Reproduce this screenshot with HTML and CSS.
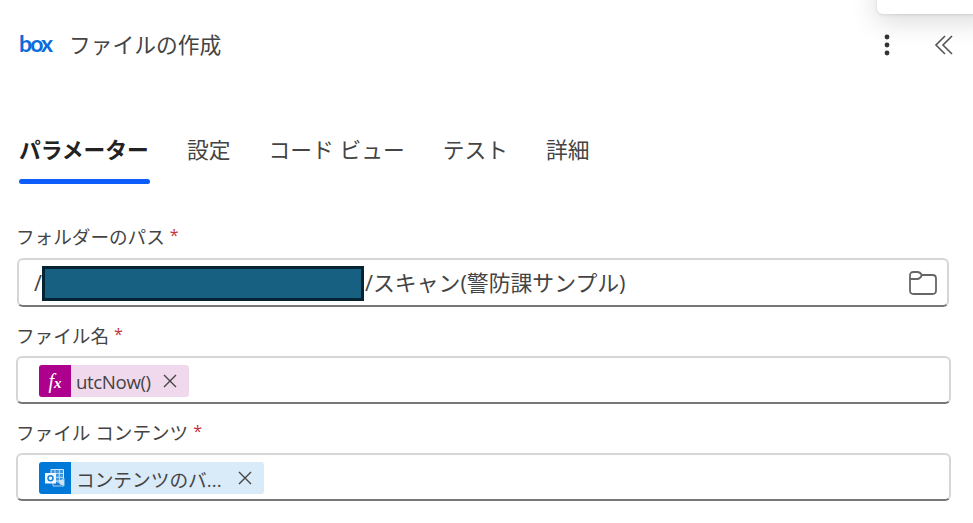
FILE: index.html
```html
<!DOCTYPE html>
<html lang="ja">
<head>
    <meta charset="UTF-8">
    <title>ファイルの作成</title>
    <link rel="stylesheet" href="styles.css">
</head>
<body>
    <div class="popup"></div>

    <div class="panel">
        <header class="header">
            <span class="logo">box</span>
            <h1>ファイルの作成</h1>
            <button class="icon-btn more-btn">
                <svg width="8" height="22" viewBox="0 0 8 22" fill="#333">
                    <circle cx="4" cy="3" r="2.4"/>
                    <circle cx="4" cy="11" r="2.4"/>
                    <circle cx="4" cy="19" r="2.4"/>
                </svg>
            </button>
            <button class="icon-btn">
                <svg width="20" height="20" viewBox="0 0 20 20" fill="none" stroke="#555" stroke-width="1.6">
                    <path d="M11 1L2 10L11 19M18 1L9 10L18 19"/>
                </svg>
            </button>
        </header>

        <nav class="tabs">
            <button class="tab active">パラメーター</button>
            <button class="tab">設定</button>
            <button class="tab">コード ビュー</button>
            <button class="tab">テスト</button>
            <button class="tab">詳細</button>
        </nav>

        <div class="form">
            <div class="field path-field">
                <label>フォルダーのパス<span class="required">*</span></label>
                <div class="input">
                    <span class="slash">/</span>
                    <span class="mask"></span>
                    <span class="path">/スキャン(警防課サンプル)</span>
                    <svg class="folder" width="30" height="26" viewBox="0 0 30 26" fill="none" stroke="#666" stroke-width="1.8">
                        <path d="M2 5.500Q2 2 5.500 2H9.500Q12 2 14 5H24.500Q28 5 28 8.500V20.500Q28 24 24.500 24H5.500Q2 24 2 20.500Z"/>
                        <path d="M2 9H9.500Q12 9 14 5"/>
                    </svg>
                </div>
            </div>

            <div class="field name-field">
                <label>ファイル名<span class="required">*</span></label>
                <div class="input">
                    <div class="token token-fx">
                        <span class="token-icon"><i>f</i><i class="sub">x</i></span>
                        <span class="token-text">utcNow()</span>
                        <svg class="close" width="14" height="14" viewBox="0 0 14 14" stroke="#444" stroke-width="1.4">
                            <path d="M1 1L13 13M13 1L1 13"/>
                        </svg>
                    </div>
                </div>
            </div>

            <div class="field content-field">
                <label>ファイル コンテンツ<span class="required">*</span></label>
                <div class="input">
                    <div class="token token-mail">
                        <span class="token-icon">
                            <svg width="20" height="20" viewBox="0 0 20 20" fill="none">
                                <path d="M6 1.500H18.500V13H6Z" fill="#3c96e0" stroke="#d5e9fa"/>
                                <path d="M10 1.500V13M14.300 1.500V13M6 5.500H18.500M6 9.300H18.500" stroke="#d5e9fa" stroke-width=".8"/>
                                <path d="M8 11L13 14.500L19 10.500V18H8Z" fill="#1979cf" stroke="#d5e9fa" stroke-width=".8"/>
                                <path d="M14 12H19V17Q16 18 14 15Z" fill="#c8e2f8"/>
                                <path d="M0 5H11V15.500H0Z" fill="#f1f7fd"/>
                                <circle cx="5.500" cy="10.200" r="2.500" stroke="#1683d8" stroke-width="1.500"/>
                            </svg>
                        </span>
                        <span class="token-text">コンテンツのバ...</span>
                        <svg class="close" width="14" height="14" viewBox="0 0 14 14" stroke="#444" stroke-width="1.4">
                            <path d="M1 1L13 13M13 1L1 13"/>
                        </svg>
                    </div>
                </div>
            </div>
        </div>
    </div>
</body>
</html>
```

FILE: styles.css
```css
* {
    box-sizing: border-box;
}

body {
    margin: 0;
    height: 523px;
    overflow: hidden;
    background-color: #fff;
    color: #444;
    font-family: "Open Sans", "Noto Sans CJK JP", sans-serif;
}

button {
    padding: 0;
    border: none;
    background: none;
    color: inherit;
    font-family: inherit;
    cursor: pointer;
}

svg {
    display: block;
    flex-shrink: 0;
}

/* 右上に重なるカード */
.popup {
    position: absolute;
    top: -20px;
    right: -20px;
    width: 116px;
    height: 34px;
    background-color: #fff;
    border-radius: 6px;
    box-shadow: 0 1px 3px rgba(0,0,0,0.1), 0 6px 28px rgba(0,0,0,0.16);
}

.header {
    display: flex;
    align-items: center;
    height: 90px;
    padding: 0 19px 0 19px;
}

.logo {
    width: 50px;
    color: #0b6bdc;
    font-family: Lato, sans-serif;
    font-size: 23px;
    font-weight: bold;
    letter-spacing: -1.9px;
    line-height: 24px;
    margin-top: -4px;
}

.header h1 {
    flex: 1;
    margin: 0;
    font-size: 21.75px;
    font-weight: normal;
    line-height: 30px;
}

.more-btn {
    margin-right: 43px;
}

.tabs {
    display: flex;
    gap: 38px;
    height: 95px;
    padding: 43px 19px 0;
}

.tab {
    height: 51px;
    padding-bottom: 17px;
    border-bottom: 5px solid transparent;
    font-size: 21.75px;
    line-height: 34px;
    white-space: nowrap;
    display: flex;
}

.tab.active {
    position: relative;
    width: 131px;
    margin-right: -1px;
    color: #222;
    font-weight: bold;
}

.tab.active::after {
    content: "";
    position: absolute;
    left: 0;
    right: 0;
    bottom: -5px;
    height: 5px;
    border-radius: 3px;
    background-color: #0c5dfb;
}

.form {
    padding: 38px 22px 0 16px;
}

.field label {
    display: block;
    height: 35px;
    font-size: 18.6px;
    line-height: 27px;
}

.required {
    margin-left: 5px;
    color: #c4313b;
    font-size: 16px;
    line-height: 1;
    vertical-align: 3px;
}

.input {
    display: flex;
    align-items: center;
    height: 48px;
    padding-left: 21px;
    border: 2px solid #d6d6d6;
    border-bottom-color: #777;
    border-radius: 6px;
}

.path-field .input {
    height: 49px;
    margin: 0 2px 0 1px;
    padding: 0 9px 0 15px;
}

.name-field {
    margin-top: 14px;
}

.content-field {
    margin-top: 14px;
}

.name-field label, .content-field label {
    line-height: 29px;
}

.slash, .path {
    font-size: 21.85px;
    line-height: 30px;
}

.slash {
    width: 8px;
}

.mask {
    width: 322px;
    height: 35px;
    margin-top: 1px;
    background-color: #176082;
    border: 3px solid #042433;
}

.path {
    flex: 1;
    margin-left: 1px;
}

.token {
    display: flex;
    align-items: center;
    height: 32px;
    margin-top: 2px;
    border-radius: 3px;
    overflow: hidden;
    font-size: 18.7px;
}

.token-fx {
    width: 150px;
    background-color: #f1d9ed;
}

.token-mail {
    width: 225px;
    background-color: #d9eaf8;
}

.token-icon {
    display: flex;
    align-items: center;
    justify-content: center;
    width: 32px;
    height: 32px;
    color: #fff;
    font-family: "Liberation Serif", serif;
    font-weight: bold;
}

.token-fx .token-icon {
    background-color: #ad008c;
    font-size: 20px;
    font-weight: normal;
}

.token-mail .token-icon {
    background-color: #0078d7;
}

.sub {
    margin-top: 4px;
    font-size: 15px;
    font-weight: bold;
}

.token-text {
    flex: 1;
    margin-left: 5px;
    white-space: nowrap;
}

.token-fx .token-text {
    letter-spacing: -0.4px;
}

.close {
    margin-right: 12px;
}
```
